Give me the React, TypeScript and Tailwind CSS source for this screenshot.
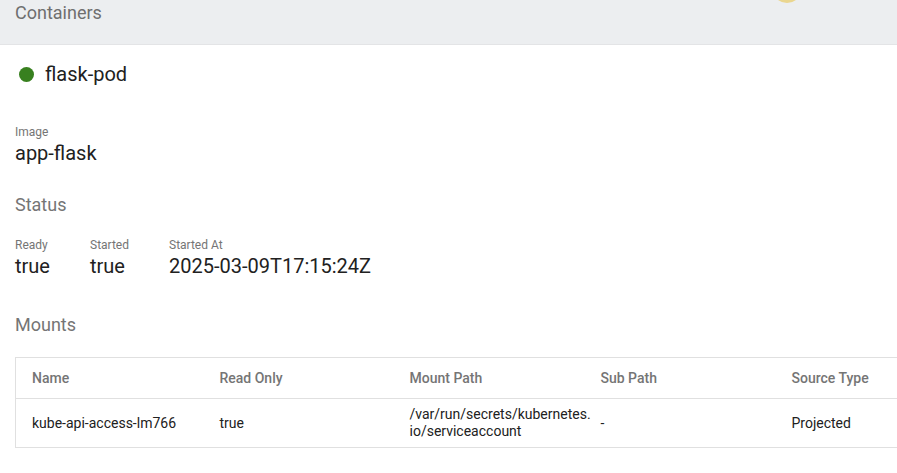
const mounts = [
  {
    name: 'kube-api-access-lm766',
    readOnly: 'true',
    mountPath: ['/var/run/secrets/kubernetes.', 'io/serviceaccount'],
    subPath: '-',
    sourceType: 'Projected',
  },
];

function Field({ label, value, width }: { label: string; value: string; width?: string }) {
  return (
    <div className={width}>
      <div className="text-[12px] leading-[14px] text-[#757575]">{label}</div>
      <div className="mt-[2px] text-[20px] leading-6 text-[#212121]">{value}</div>
    </div>
  );
}

export default function App() {
  return (
    <div className="relative w-[897px] h-[473px] overflow-hidden bg-white font-['Roboto',sans-serif]">
      {/* header strip */}
      <div className="h-[44px] bg-[#eceef0] px-[15px] pt-[1px] text-[18px] leading-6 text-[#6f6f6f]">
        Containers
      </div>
      <div className="absolute left-[772px] top-[-27px] h-[30px] w-[30px] rounded-full bg-[#ead68f]" />

      <div className="border-t border-[#e3e4e6] pl-[15px]">
        <div className="flex items-center pt-[17px]">
          <span className="ml-[4px] h-[15px] w-[15px] rounded-full bg-[#38801f]" />
          <span className="ml-[11px] text-[20px] leading-6 text-[#212121]">flask-pod</span>
        </div>

        <div className="mt-[39px]">
          <Field label="Image" value="app-flask" />
        </div>

        <div className="mt-[28px] text-[18px] leading-6 text-[#757575]">Status</div>
        <div className="mt-[21px] flex">
          <Field label="Ready" value="true" width="w-[75px]" />
          <Field label="Started" value="true" width="w-[79px]" />
          <Field label="Started At" value="2025-03-09T17:15:24Z" />
        </div>

        <div className="mt-[35px] text-[18px] leading-6 text-[#757575]">Mounts</div>

        <table className="mt-[20px] w-[1000px] table-fixed border-collapse border border-[#e0e0e0] text-[14px] leading-[17px]">
          <colgroup>
            <col className="w-[188px]" />
            <col className="w-[190px]" />
            <col className="w-[191px]" />
            <col className="w-[191px]" />
            <col />
          </colgroup>
          <thead>
            <tr className="h-[41px] border-b border-[#e0e0e0] text-left font-medium text-[#757575]">
              <th className="pl-4 font-medium">Name</th>
              <th className="pl-4 font-medium">Read Only</th>
              <th className="pl-4 font-medium">Mount Path</th>
              <th className="pl-4 font-medium">Sub Path</th>
              <th className="pl-4 font-medium">Source Type</th>
            </tr>
          </thead>
          <tbody>
            {mounts.map((m) => (
              <tr key={m.name} className="h-[49px] text-[#212121]">
                <td className="pl-4">{m.name}</td>
                <td className="pl-4">{m.readOnly}</td>
                <td className="pl-4 whitespace-nowrap">
                  {m.mountPath[0]}
                  <br />
                  {m.mountPath[1]}
                </td>
                <td className="pl-4">{m.subPath}</td>
                <td className="pl-4">{m.sourceType}</td>
              </tr>
            ))}
          </tbody>
        </table>
      </div>
    </div>
  );
}
